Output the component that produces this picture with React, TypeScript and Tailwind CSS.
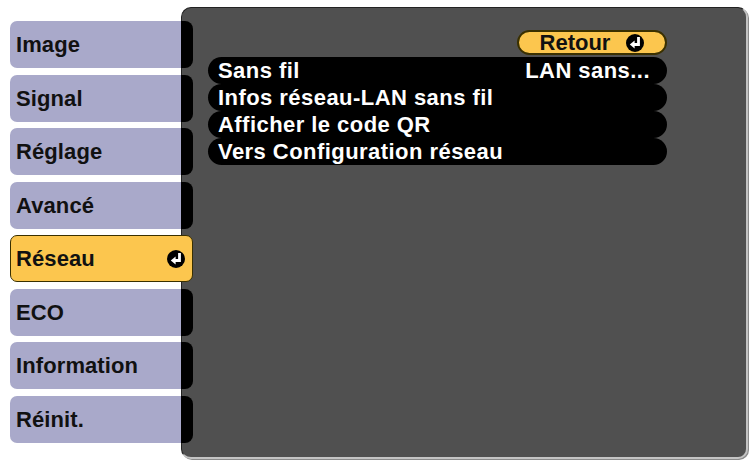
import React from 'react';

// Enter / return glyph used by the OSD (black disc, white hooked arrow)
const EnterIcon: React.FC<{ className?: string }> = ({ className }) => (
  <svg viewBox="0 0 18 18" className={className}>
    <circle cx="9" cy="9" r="9" fill="#000" />
    <path d="M12.5 4.5 V10.5 H8" fill="none" stroke="#fff" strokeWidth="2.8" strokeLinecap="square" />
    <polygon points="3.8,10.5 8.6,6.6 8.6,14.4" fill="#fff" />
  </svg>
);

const App: React.FC = () => {
  const menu = ['Image', 'Signal', 'Réglage', 'Avancé', 'Réseau', 'ECO', 'Information', 'Réinit.'];
  const active = 'Réseau';

  const rows = [
    { label: 'Sans fil', value: 'LAN sans...' },
    { label: 'Infos réseau-LAN sans fil', value: '' },
    { label: 'Afficher le code QR', value: '' },
    { label: 'Vers Configuration réseau', value: '' },
  ];

  return (
    <div
      className="w-[754px] h-[462px] bg-white flex items-start pt-[7px] overflow-hidden"
      style={{ fontFamily: '"Liberation Sans", Arial, sans-serif' }}
    >
      {/* menu de gauche */}
      <div className="relative z-10 ml-[10px] mt-[14px] w-[183px] flex flex-col gap-[6.5px]">
        {menu.map((item) =>
          item === active ? (
            <div
              key={item}
              className="h-[47px] flex items-center justify-between bg-[#fcc64e] border border-[#3a3000] rounded-[7px] pl-[5px] pr-[7px]"
            >
              <span className="text-[22px] font-bold text-[#111] tracking-[0.1px]">{item}</span>
              <EnterIcon className="w-[18px] h-[18px]" />
            </div>
          ) : (
            <div key={item} className="h-[47px] flex">
              <div className="flex-1 flex items-center bg-[#a9a9ca] rounded-l-[7px] pl-[6px]">
                <span className="text-[22px] font-bold text-[#111] tracking-[0.1px]">{item}</span>
              </div>
              <div className="w-[12px] bg-black rounded-r-[8px]" />
            </div>
          )
        )}
      </div>

      {/* panneau */}
      <div className="ml-[-12px] w-[567px] h-[452px] bg-[#505050] rounded-[10px] border-t border-l border-r-2 border-b-2 border-t-[#222] border-l-[#222] border-r-[#c4c4c4] border-b-[#c4c4c4] shadow-[1px_1px_0_#8a8a8a]">
        <div className="ml-[26px] w-[459px] flex flex-col">
          <div className="self-end mt-[22px] w-[150px] h-[25px] rounded-full bg-[#fcc64e] border-2 border-[#3a3000] flex items-center justify-center gap-[16px]">
            <span className="text-[22px] font-bold text-[#111] leading-none">Retour</span>
            <EnterIcon className="w-[18px] h-[18px]" />
          </div>
          <div className="mt-[2px] flex flex-col">
            {rows.map((r) => (
              <div
                key={r.label}
                className="h-[27px] bg-black rounded-full flex items-center justify-between pl-[10px] pr-[17px]"
              >
                <span className="text-[22px] font-bold text-white leading-none tracking-[0.45px]">{r.label}</span>
                <span className="text-[22px] font-bold text-white leading-none tracking-[0.45px]">{r.value}</span>
              </div>
            ))}
          </div>
        </div>
      </div>
    </div>
  );
};

export default App;
